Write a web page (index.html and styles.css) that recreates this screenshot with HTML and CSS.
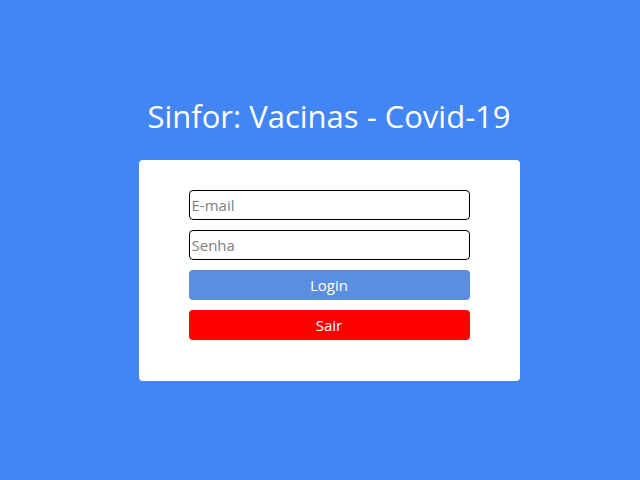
FILE: index.html
```html
<!DOCTYPE html>
<html>
<head>
<meta charset="utf-8">
<link rel="stylesheet" href="styles.css">
</head>
<body>
<div class="page">
  <h1 class="title">Sinfor: Vacinas - Covid-19</h1>
  <form class="card">
    <input class="field" type="text" placeholder="E-mail">
    <input class="field" type="password" placeholder="Senha">
    <button class="btn btn-login" type="button">Login</button>
    <button class="btn btn-exit" type="button">Sair</button>
  </form>
</div>
</body>
</html>
```

FILE: styles.css
```css
html, body {
  margin: 0;
  padding: 0;
  height: 100%;
}
body {
  background: #4285f4;
  font-family: "Open Sans", "DejaVu Sans", sans-serif;
}
.page {
  display: flex;
  flex-direction: column;
  align-items: center;
  padding-top: 94px;
  padding-left: 18px;
}
.title {
  margin: 0;
  height: 66px;
  font-size: 31px;
  font-weight: 400;
  line-height: 44px;
  color: #ffffff;
  text-align: center;
}
.card {
  box-sizing: border-box;
  width: 381px;
  padding: 30px 50px 41px;
  background: #ffffff;
  border-radius: 4px;
  display: flex;
  flex-direction: column;
  gap: 10px;
}
.field {
  box-sizing: border-box;
  height: 30px;
  width: 281px;
  margin: 0;
  padding: 0 2px;
  border: 1px solid #000000;
  border-radius: 4px;
  font-family: inherit;
  font-size: 15px;
  color: #222;
  outline: none;
}
.field::placeholder {
  color: #808080;
}
.btn {
  box-sizing: border-box;
  height: 30px;
  width: 281px;
  margin: 0;
  border: none;
  border-radius: 4px;
  color: #ffffff;
  font-family: inherit;
  font-size: 15px;
}
.btn-login {
  background: #5b8ede;
}
.btn-exit {
  background: #ff0000;
}
```
